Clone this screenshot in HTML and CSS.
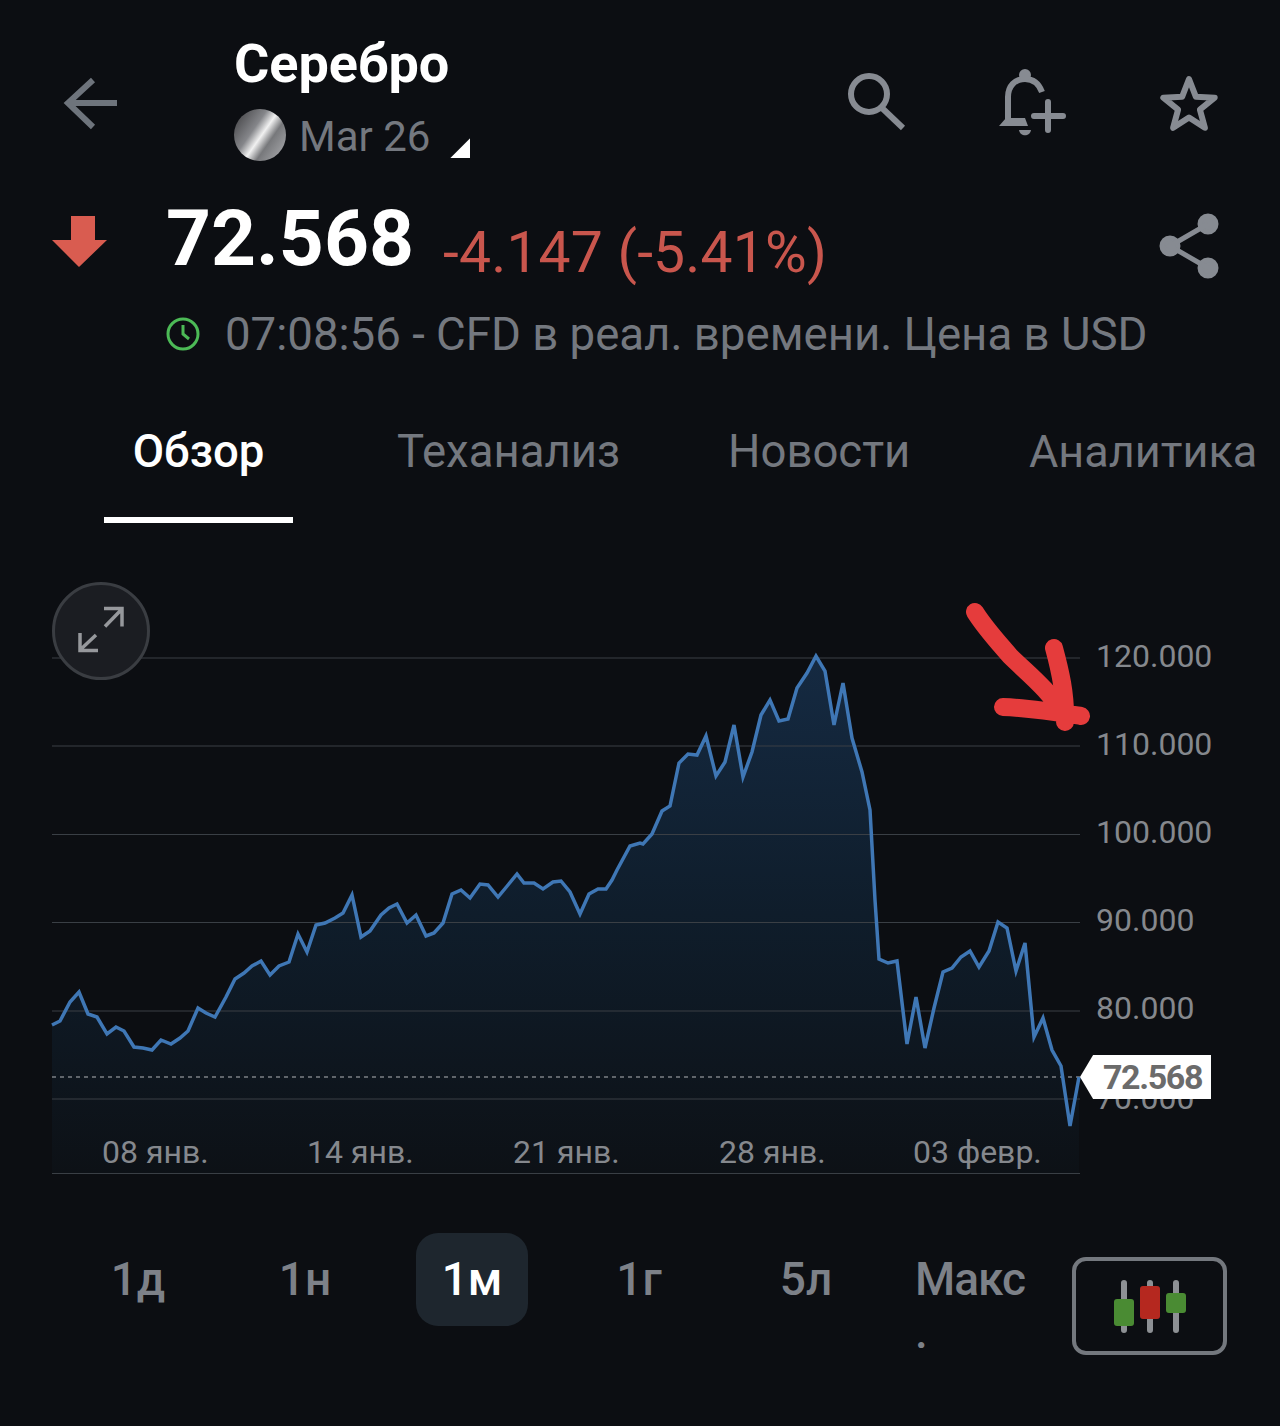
FILE: index.html
```html
<!DOCTYPE html>
<html>
	<head>
		<meta charset="UTF-8">
		<title>Серебро</title>
		<link rel="stylesheet" href="styles.css">
	</head>
	<body>
		<div id="page">

			<!--шапка-->
			<div class="head">
				<svg class="back" width="60" height="60" viewBox="62 73 60 60">
					<path d="M117 103H68M93 80L68 103L93 127" />
				</svg>
				<div class="title">
					<h1>Серебро</h1>
					<div class="contract">
						<i class="coin"></i>
						<span>Mar 26</span>
						<i class="corner"></i>
					</div>
				</div>
				<div class="actions">
					<svg class="ico" width="66" height="66" viewBox="844 66 66 66">
						<circle cx="868" cy="94" r="18" />
						<path d="M881 108L902 128" />
					</svg>
					<svg class="ico" width="72" height="72" viewBox="997 68 72 72">
						<path d="M1009 122V97C1009 86 1016 79 1026 79C1034 79 1040 84 1043 92" />
						<circle class="fill" cx="1026" cy="75" r="3" />
						<path class="fill flat" d="M1007 118H1026L1029 126H1000Z" />
						<path class="fill flat" d="M1020 130H1032C1031 137 1021 137 1020 130Z" />
						<path class="round" d="M1049 102V130M1035 116H1064" />
					</svg>
					<svg class="ico" width="66" height="66" viewBox="1156 73 66 66">
						<path class="round" d="M1189 79L1195.800 96.700L1214.700 97.700L1199.900 109.600L1204.900 127.800L1189 117.500L1173.100 127.800L1178.100 109.600L1163.300 97.700L1182.200 96.700Z" />
					</svg>
				</div>
			</div>

			<!--цена-->
			<div class="price">
				<svg class="down" width="56" height="54" viewBox="52 214 56 54">
					<path d="M71 216H95V240H107L79 267L52 240H71Z" />
				</svg>
				<b class="last">72.568</b>
				<span class="change">-4.147 (-5.41%)</span>
				<svg class="ico share" width="66" height="70" viewBox="1156 211 66 70">
					<circle class="fill" cx="1208" cy="224" r="8" />
					<circle class="fill" cx="1170" cy="246" r="8" />
					<circle class="fill" cx="1208" cy="268" r="8" />
					<path d="M1208 224L1170 246L1208 268" />
				</svg>
			</div>

			<div class="time">
				<svg class="clock" width="36" height="36" viewBox="0 0 36 36">
					<circle cx="18" cy="18" r="15" />
					<path d="M18 9V18L24 23" />
				</svg>
				<span>07:08:56 - CFD в реал. времени. Цена в USD</span>
			</div>

			<!--вкладки-->
			<ul class="tabs">
				<li class="on">Обзор</li>
				<li>Теханализ</li>
				<li>Новости</li>
				<li class="end">Аналитика</li>
			</ul>

			<!--график-->
			<div class="chart">
				<svg width="1280" height="667" viewBox="0 523 1280 667">
					<defs>
						<linearGradient id="areaFill" gradientUnits="userSpaceOnUse" x1="0" y1="655" x2="0" y2="1173">
							<stop offset="0" stop-color="#152a42" />
							<stop offset="0.5" stop-color="#0f1d2b" />
							<stop offset="1" stop-color="#0d1116" />
						</linearGradient>
					</defs>
					<polygon class="area" points="52,1173 52,1025 60,1021 70,1002 79,992 88,1014 97,1017 107,1034 116,1027 124,1031 134,1047 143,1048 152,1050 161,1040 171,1044 180,1038 188,1031 198,1008 206,1013 215,1017 226,997 235,979 244,973 252,966 261,961 270,975 279,966 289,962 298,934 307,952 316,925 325,923 335,918 343,913 352,895 361,937 370,931 381,915 389,908 397,904 407,923 416,915 426,936 434,933 443,923 452,894 461,890 470,898 480,884 488,885 498,897 508,885 517,874 524,883 534,883 543,889 553,882 561,881 570,892 580,914 589,894 598,889 606,889 612,880 617,870 630,846 640,843 643,844 652,834 662,811 670,806 679,763 688,754 697,755 706,736 716,776 725,762 734,725 743,777 752,752 761,715 770,700 779,721 788,719 797,688 807,673 816,656 825,671 834,725 843,683 852,738 862,772 870,810 875,900 879,959 888,963 897,961 907,1044 916,997 925,1048 934,1008 943,972 952,968 961,957 970,951 979,967 989,951 998,922 1007,928 1016,971 1025,943 1034,1037 1043,1018 1052,1050 1061,1066 1070,1126 1079,1077 1079,1173" />
					<g class="grid">
						<path d="M52 658H1080M52 746H1080M52 834.500H1080M52 922.500H1080M52 1011H1080M52 1099H1080M52 1173.500H1080" />
					</g>
					<path class="last-line" d="M52 1077H1080" />
					<polyline class="line" points="52,1025 60,1021 70,1002 79,992 88,1014 97,1017 107,1034 116,1027 124,1031 134,1047 143,1048 152,1050 161,1040 171,1044 180,1038 188,1031 198,1008 206,1013 215,1017 226,997 235,979 244,973 252,966 261,961 270,975 279,966 289,962 298,934 307,952 316,925 325,923 335,918 343,913 352,895 361,937 370,931 381,915 389,908 397,904 407,923 416,915 426,936 434,933 443,923 452,894 461,890 470,898 480,884 488,885 498,897 508,885 517,874 524,883 534,883 543,889 553,882 561,881 570,892 580,914 589,894 598,889 606,889 612,880 617,870 630,846 640,843 643,844 652,834 662,811 670,806 679,763 688,754 697,755 706,736 716,776 725,762 734,725 743,777 752,752 761,715 770,700 779,721 788,719 797,688 807,673 816,656 825,671 834,725 843,683 852,738 862,772 870,810 875,900 879,959 888,963 897,961 907,1044 916,997 925,1048 934,1008 943,972 952,968 961,957 970,951 979,967 989,951 998,922 1007,928 1016,971 1025,943 1034,1037 1043,1018 1052,1050 1061,1066 1070,1126 1079,1077" />
					<g class="axis">
						<text x="1096" y="667">120.000</text>
						<text x="1096" y="755">110.000</text>
						<text x="1096" y="843">100.000</text>
						<text x="1096" y="931">90.000</text>
						<text x="1096" y="1019">80.000</text>
						<text x="1096" y="1109">70.000</text>
						<text x="102" y="1163">08 янв.</text>
						<text x="307" y="1163">14 янв.</text>
						<text x="513" y="1163">21 янв.</text>
						<text x="719" y="1163">28 янв.</text>
						<text x="913" y="1163">03 февр.</text>
					</g>
					<!--красная стрелка от руки-->
					<path class="marker" d="M975 612C985 628 998 642 1010 656C1026 672 1050 690 1065 717M1054 648C1060 670 1066 695 1065 722M1003 707C1030 708 1055 712 1081 716" />
				</svg>
				<div class="expand">
					<svg width="50" height="50" viewBox="76 606 50 50">
						<path d="M104 609.500H122V627.500M122 610L105 627.500M80 634V651.500H98M80 651L96 636" />
					</svg>
				</div>
				<div class="tag">72.568</div>
			</div>

			<!--периоды-->
			<div class="range">
				<a>1д</a>
				<a>1н</a>
				<a class="on">1м</a>
				<a>1г</a>
				<a>5л</a>
				<a class="max">Макс<br>.</a>
				<div class="candles">
					<svg width="80" height="60" viewBox="1110 1277 80 60">
						<path class="wick" d="M1124 1283V1330M1150 1283V1330M1176 1283V1330" />
						<rect class="up" x="1114" y="1299" width="20" height="27" rx="3" />
						<rect class="dn" x="1140" y="1286" width="20" height="33" rx="3" />
						<rect class="up" x="1166" y="1293" width="20" height="20" rx="3" />
					</svg>
				</div>
			</div>

		</div>
	</body>
</html>
```

FILE: styles.css
```css
*{
	margin:0;
	padding:0;
	list-style: none;
	box-sizing: border-box;
}

body{
	background: #0c0e12;
	font-family: Roboto, "Noto Sans", sans-serif;
	color: #74787f;
}
#page{
	width:1280px;
	height:1426px;
	overflow: hidden;
}

svg{
	display: block;
}

/* шапка */
.head{
	display: flex;
	height:190px;
	padding-left:62px;
}
.back{
	margin-top:73px;
	fill: none;
	stroke: #6e747c;
	stroke-width: 6;
}
.title{
	margin-left:112px;
	padding-top:33px;
	width:300px;
}
.title h1{
	font-size:54px;
	line-height:62px;
	font-weight: 700;
	color: #fff;
}
.contract{
	display: flex;
	align-items: center;
	height:52px;
	margin-top:14px;
	font-size:42px;
}
.contract span{
	margin-left:13px;
	padding-top:2px;
}
.coin{
	display: block;
	width:52px;
	height:52px;
	border-radius: 50%;
	background: linear-gradient(125deg, #4c4c4f 10%, #85868a 38%, #f1f1f1 52%, #77787b 66%, #a3a4a7 92%);
}
.corner{
	display: block;
	width:20px;
	height:20px;
	margin:26px 0 0 20px;
	background: #fff;
	clip-path: polygon(0 100%, 100% 0, 100% 100%);
}
.actions{
	display: flex;
	gap:90px;
	margin-left:311px;
	padding-top:66px;
	align-items: flex-start;
}
.actions .ico:nth-child(2){
	margin-left:-5px;
	margin-top:2px;
}
.actions .ico:nth-child(3){
	margin-left:-2px;
	margin-top:7px;
}

.ico{
	fill: none;
	stroke: #878b92;
	stroke-width: 6;
}
.ico .fill{
	fill: #878b92;
}
.ico .flat{
	stroke: none;
}
.ico .round{
	stroke-linecap: round;
	stroke-linejoin: round;
}

/* цена */
.price{
	display: flex;
	align-items: flex-start;
	height:110px;
	padding-left:52px;
	position: relative;
}
.down{
	margin-top:24px;
	fill: #d95c50;
}
.last{
	margin-left:58px;
	font-size:78.5px;
	line-height:96px;
	font-weight: 700;
	color: #fff;
}
.change{
	margin-left:29px;
	padding-top:29px;
	font-size:57px;
	line-height:68px;
	letter-spacing: .2px;
	color: #c9564d;
}
.share{
	margin-left:auto;
	margin-right:58px;
	margin-top:21px;
	stroke-width: 5;
}

.time{
	display: flex;
	align-items: center;
	height:68px;
	padding-left:165px;
	font-size:45.6px;
}
.clock{
	fill: none;
	stroke: #4cba56;
	stroke-width: 3;
}
.time span{
	margin-left:24px;
}

/* вкладки */
.tabs{
	display: grid;
	grid-template-columns: 189px 227px 198px 226px;
	gap:104px;
	height:155px;
	padding-left:104px;
}
.tabs li{
	padding-top:54px;
	font-size:45.5px;
	line-height:60px;
	white-space: nowrap;
}
.tabs .end{
	font-size:45px;
	margin-left:-1px;
}
.tabs .on{
	color: #fff;
	font-weight: 500;
	text-align: center;
	border-bottom:6px solid #fff;
}

/* график */
.chart{
	position: relative;
	height:667px;
}
.area{
	fill: url(#areaFill);
}
.grid{
	fill: none;
	stroke: #3a3f45;
	stroke-width: 1.2;
}
.last-line{
	fill: none;
	stroke: #7c8085;
	stroke-width: 1.5;
	stroke-dasharray: 4 4;
}
.line{
	fill: none;
	stroke: #3f77b5;
	stroke-width: 3.5;
}
.axis text{
	font-family: Roboto, sans-serif;
	font-size:32px;
	fill: #85888d;
}
.marker{
	fill: none;
	stroke: #e53c3c;
	stroke-width: 18;
	stroke-linecap: round;
	stroke-linejoin: round;
}
.expand{
	position: absolute;
	left:52px;
	top:59px;
	width:98px;
	height:98px;
	padding:20px 0 0 21px;
	border:3px solid #3a3d42;
	border-radius: 50%;
	background: #1b1d22;
}
.expand svg{
	fill: none;
	stroke: #96989c;
	stroke-width: 3.5;
}
.tag{
	position: absolute;
	left:1080px;
	top:532px;
	width:131px;
	height:44px;
	padding-left:23px;
	background: #fff;
	clip-path: polygon(0 50%, 10% 0, 100% 0, 100% 100%, 10% 100%);
	font-size:34px;
	line-height:44px;
	letter-spacing: -1.4px;
	font-weight: 700;
	color: #6b6b6b;
}

/* периоды */
.range{
	display: flex;
	gap:55px;
	height:236px;
	padding:43px 0 0 82px;
}
.range a{
	display: block;
	width:112px;
	height:93px;
	border-radius: 22px;
	font-size:46px;
	font-weight: 500;
	line-height:93px;
	text-align: center;
	color: #7d8188;
}
.range .on{
	background: #1e262e;
	color: #fff;
}
.range .max{
	margin-left:-2px;
	padding-top:20px;
	line-height:53px;
	letter-spacing: -1px;
	text-align: left;
	white-space: nowrap;
}
.candles{
	width:155px;
	height:98px;
	margin:24px 0 0 -10px;
	padding:16px 0 0 34px;
	border:4px solid #74787e;
	border-radius: 14px;
}
.wick{
	stroke: #8d9094;
	stroke-width: 6;
	stroke-linecap: round;
}
.up{
	fill: #4a8b33;
}
.dn{
	fill: #b5281f;
}
```
